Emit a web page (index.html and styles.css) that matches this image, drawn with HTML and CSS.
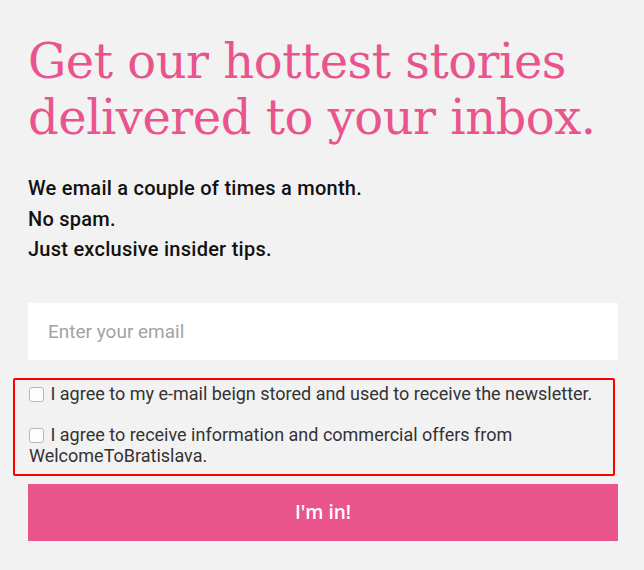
FILE: index.html
```html
<!DOCTYPE html>
<html>
<head>
  <title>Newsletter signup</title>
  <link rel="stylesheet" href="styles.css">
</head>
<body>
<div class="wrapper">
  <h1>Get our hottest stories delivered to your inbox.</h1>
  <div class="intro">
    <p>We email a couple of times a month.</p>
    <p>No spam.</p>
    <p>Just exclusive insider tips.</p>
  </div>
  <form class="signup">
    <input type="email" class="email" placeholder="Enter your email">
    <div class="consents">
      <label class="consent"><input type="checkbox"> I agree to my e-mail beign stored and used to receive the newsletter.</label>
      <label class="consent"><input type="checkbox"> I agree to receive information and commercial offers from WelcomeToBratislava.</label>
    </div>
    <button type="button">I'm in!</button>
  </form>
</div>
</body>
</html>
```

FILE: styles.css
```css
body {
  margin: 0;
  background: #f2f2f2;
  font-family: 'Roboto', sans-serif;
}
.wrapper {
  width: 590px;
  padding: 33px 0 0 28px;
}
h1 {
  margin: 0;
  font-family: 'DejaVu Serif', serif;
  font-weight: 400;
  font-size: 48px;
  line-height: 56px;
  color: #e9548e;
  letter-spacing: -0.5px;
}
.intro {
  margin-top: 28px;
}
.intro p {
  margin: 0;
  font-size: 20px;
  font-weight: 500;
  line-height: 30.5px;
  letter-spacing: 0.25px;
  color: #111;
}
.signup {
  margin-top: 38px;
}
.email {
  display: block;
  box-sizing: border-box;
  width: 100%;
  height: 57px;
  padding: 0 20px;
  border: 0;
  outline: 0;
  background: #fff;
  font-family: 'Roboto', sans-serif;
  font-size: 19px;
  color: #333;
}
.email::placeholder {
  color: #a3a3a3;
}
.consents {
  margin: 18px 3px 0 -15px;
  padding: 3px 0 8px 14px;
  border: 2px solid #f00;
  border-radius: 2px;
}
.consent {
  display: block;
  font-size: 18px;
  line-height: 21px;
  color: #333;
  margin-bottom: 20px;
}
.consent:last-child {
  margin-bottom: 0;
}
.consent input {
  appearance: none;
  box-sizing: border-box;
  width: 15px;
  height: 15px;
  margin: 0 2px 0 0;
  vertical-align: -2px;
  border: 1px solid #b8b8b8;
  border-radius: 3px;
  background: #fdfdfd;
}
button {
  display: block;
  width: 100%;
  height: 57px;
  margin-top: 8px;
  border: 0;
  background: #e9548b;
  color: #fff;
  font-family: 'Open Sans', sans-serif;
  font-weight: 600;
  font-size: 19px;
  cursor: pointer;
}
```
